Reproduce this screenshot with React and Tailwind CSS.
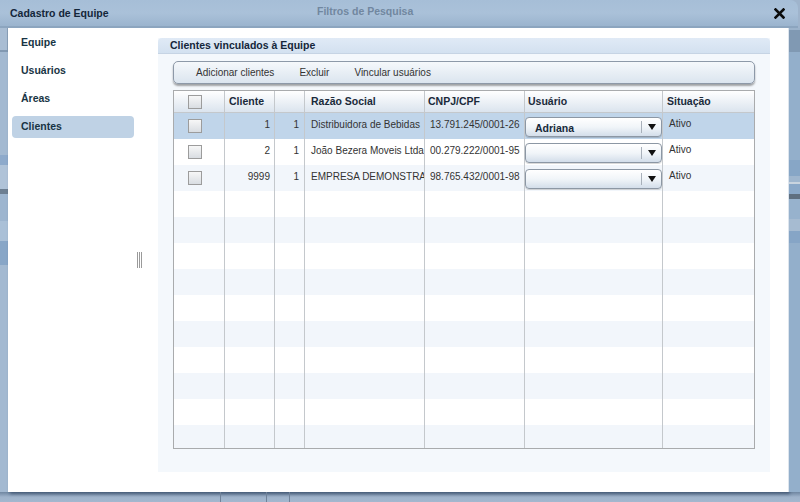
import React from "react";

const cols = [51, 50, 30, 120, 100, 138, 91];

const rows = [
  { id: "1", n: "1", name: "Distribuidora de Bebidas", cnpj: "13.791.245/0001-26", user: "Adriana", sit: "Ativo" },
  { id: "2", n: "1", name: "João Bezera Moveis Ltda", cnpj: "00.279.222/0001-95", user: "", sit: "Ativo" },
  { id: "9999", n: "1", name: "EMPRESA DEMONSTRAÇÃO", cnpj: "98.765.432/0001-98", user: "", sit: "Ativo" },
];

function Check() {
  return (
    <div className="w-[14px] h-[14px] border border-[#9c9c9c] bg-gradient-to-b from-[#f7f7f7] to-[#d9dde2]" />
  );
}

function Select({ value }) {
  return (
    <div className="w-[137px] h-[20px] rounded-[4px] border border-[#8c97a4] bg-gradient-to-b from-[#ffffff] via-[#f1f5f9] to-[#d3deea] flex items-center shadow-[0_1px_0_rgba(0,0,0,0.15)]">
      <div className="flex-1 pl-[9px] font-bold text-[#16293a] text-[10.5px] leading-none pt-[2px]">{value}</div>
      <div className="w-px h-[12px] bg-[#a8b0ba]" />
      <div className="w-[19px] flex items-center justify-center">
        <svg width="8" height="6" viewBox="0 0 8 6"><path d="M0 0H8L4 6Z" fill="#111" /></svg>
      </div>
    </div>
  );
}

function Cell({ w, children, className = "", last }) {
  return (
    <div
      style={{ width: w }}
      className={`h-full shrink-0 flex overflow-hidden whitespace-nowrap ${last ? "" : "border-r border-[#c4c8cc]"} ${className}`}
    >
      {children}
    </div>
  );
}

export default function App() {
  const emptyCount = 10;
  return (
    <div className="w-[800px] h-[502px] overflow-hidden bg-[#9fb4cc] font-['Liberation_Sans',Arial,sans-serif] text-[10px] relative">
      {/* Title bar */}
      <div className="relative h-[28px] w-[798px] rounded-tr-[8px] bg-gradient-to-b from-[#a6bed7] via-[#aac1d9] to-[#9bb4ce] border-b-2 border-[#8ca5bf] flex items-center">
        <span className="pl-[10px] font-bold text-[10.5px] text-[#14263a] pt-[2px]">Cadastro de Equipe</span>
        <span className="absolute left-[317px] top-[4px] font-bold text-[10.5px] text-[#71879f]">Filtros de Pesquisa</span>
        <svg className="absolute left-[774px] top-[8px]" width="11" height="11" viewBox="0 0 11 11">
          <path d="M1.5 1.5L9.5 9.5M9.5 1.5L1.5 9.5" stroke="#0b0b0b" strokeWidth="2.6" strokeLinecap="square" />
        </svg>
      </div>

      <div className="flex h-[464px]">
        {/* left underlying strip */}
        <div className="w-[8px] h-full flex flex-col bg-[#a3b9d1]">
          <div className="h-[22px] bg-[#a9bdd3] border-r border-[#8aa0b8]" />
          <div className="h-[2px] bg-[#8299b2]" />
          <div className="h-[103px]" />
          <div className="h-[10px] bg-[#8eaacb]" />
          <div className="h-[24px] bg-[#b0c3d8]" />
          <div className="h-[5px] bg-[#6d7f92]" />
          <div className="h-[27px] bg-[#9db5cf]" />
          <div className="h-[20px] bg-[#aac0d7]" />
          <div className="h-[24px] bg-[#88a6c7]" />
          <div className="flex-1" />
        </div>

        {/* White body */}
        <div className="w-[780px] h-full bg-white flex shadow-[2px_2px_3px_rgba(40,60,90,0.6)]">
          {/* nav */}
          <div className="relative w-[150px] h-full pt-[4px] pl-[4px] flex flex-col gap-[6px]">
            {["Equipe", "Usuários", "Áreas", "Clientes"].map((t) => (
              <div
                key={t}
                className={`w-[122px] h-[22px] rounded-[4px] pl-[9px] flex items-center font-bold text-[10.5px] text-[#183444] ${t === "Clientes" ? "bg-[#bfd2e5]" : ""}`}
              >
                {t}
              </div>
            ))}
            <div className="absolute left-[129px] top-[224px] flex gap-[1px]">
              <div className="w-px h-[16px] bg-[#9a9a9a]" />
              <div className="w-px h-[16px] bg-[#9a9a9a]" />
              <div className="w-px h-[16px] bg-[#9a9a9a]" />
            </div>
          </div>

          {/* panel */}
          <div className="pt-[10px]">
            <div className="w-[612px] h-[434px] bg-[#f4f8fc] flex flex-col">
              <div className="h-[16px] rounded-t-[4px] bg-gradient-to-b from-[#e0eaf6] to-[#d3e1f0] border-b border-[#c6d4e4] pl-[12px] flex items-center font-bold text-[10.5px] text-[#14263a]">
                Clientes vinculados à Equipe
              </div>
              <div className="pl-[15px] pt-[7px]">
                {/* toolbar */}
                <div className="w-[582px] h-[23px] rounded-[5px] border border-[#8d99a8] bg-gradient-to-b from-[#f5f8fb] to-[#dbe5ef] shadow-[0_2px_2px_rgba(0,0,0,0.35)] flex items-center pl-[22px] gap-[25px] text-[#333]">
                  <span>Adicionar clientes</span>
                  <span>Excluir</span>
                  <span>Vincular usuários</span>
                </div>

                {/* table */}
                <div className="mt-[6px] w-[582px] h-[359px] border border-[#a9abad] overflow-hidden bg-white">
                  <div className="h-[22px] flex bg-gradient-to-b from-[#ffffff] to-[#dbe4ee] border-b border-[#c4c8cc] font-bold text-[10.5px] text-[#1a2a3a]">
                    <Cell w={cols[0]} className="pl-[14px] items-center"><Check /></Cell>
                    <Cell w={cols[1]} className="pl-[4px] items-center">Cliente</Cell>
                    <Cell w={cols[2]} />
                    <Cell w={cols[3]} className="pl-[6px] items-center">Razão Social</Cell>
                    <Cell w={cols[4]} className="pl-[3px] items-center">CNPJ/CPF</Cell>
                    <Cell w={cols[5]} className="pl-[3px] items-center">Usuário</Cell>
                    <Cell w={cols[6]} className="pl-[4px] items-center" last>Situação</Cell>
                  </div>
                  {rows.map((r, i) => (
                    <div
                      key={r.id}
                      className={`h-[26px] flex text-[#333] ${i === 0 ? "bg-[#c0d5ea]" : i % 2 === 1 ? "bg-white" : "bg-[#f2f6fb]"}`}
                    >
                      <Cell w={cols[0]} className="pl-[14px] items-center"><Check /></Cell>
                      <Cell w={cols[1]} className="justify-end pr-[4px] pt-[4px]">{r.id}</Cell>
                      <Cell w={cols[2]} className="justify-end pr-[5px] pt-[4px]">{r.n}</Cell>
                      <Cell w={cols[3]} className="pl-[6px] pt-[4px]">{r.name}</Cell>
                      <Cell w={cols[4]} className="pl-[5px] pt-[4px]">{r.cnpj}</Cell>
                      <Cell w={cols[5]} className="pt-[4px]"><Select value={r.user} /></Cell>
                      <Cell w={cols[6]} className="pl-[6px] pt-[3px]" last>{r.sit}</Cell>
                    </div>
                  ))}
                  {Array.from({ length: emptyCount }).map((_, k) => {
                    const i = k + 3;
                    return (
                      <div key={i} className={`h-[26px] flex ${i % 2 === 1 ? "bg-white" : "bg-[#f2f6fb]"}`}>
                        {cols.map((w, j) => (
                          <Cell key={j} w={w} last={j === 6} />
                        ))}
                      </div>
                    );
                  })}
                </div>
              </div>
            </div>
          </div>
        </div>

        {/* right strip */}
        <div className="w-[12px] h-full flex flex-col bg-[#93afcb] border-l border-[#dde5ee]">
          <div className="h-[2px] bg-[#9cb3cb]" />
          <div className="h-[22px] bg-[#8099b3]" />
          <div className="h-[108px]" />
          <div className="h-[16px] bg-[#87a6c6]" />
          <div className="h-[6px] bg-[#9fb6ce]" />
          <div className="h-[2px] bg-[#c9d4df]" />
          <div className="h-[10px] bg-[#8aa8c8]" />
          <div className="h-[5px] bg-[#5f6f80]" />
          <div className="h-[20px] bg-[#97b2cd]" />
          <div className="h-[12px] bg-[#a6bbd1]" />
          <div className="h-[12px] bg-[#86a5c6]" />
          <div className="flex-1" />
        </div>
      </div>

      {/* bottom strip */}
      <div className="h-[10px] flex bg-gradient-to-b from-[#6f86a0] via-[#9fb3cb] to-[#a3b7ce]">
        <div className="w-[221px] border-r border-[#6f8299]" />
        <div className="w-[46px] border-r border-[#6f8299]" />
        <div className="w-[23px] border-r border-[#6f8299]" />
      </div>
    </div>
  );
}
